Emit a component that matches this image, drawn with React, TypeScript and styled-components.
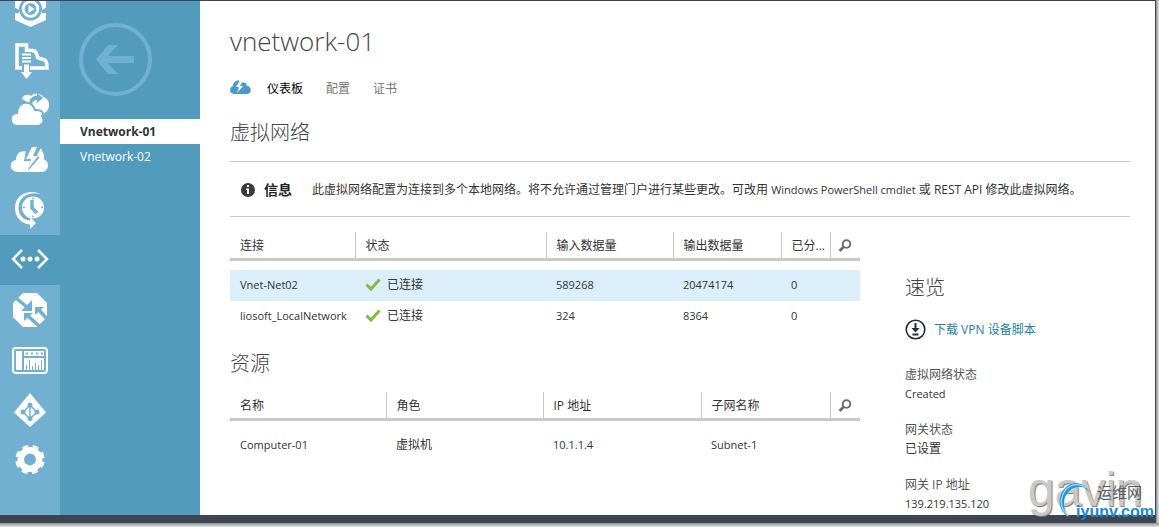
import React from "react";
import styled, { createGlobalStyle, css } from "styled-components";

const Global = createGlobalStyle`
  * { box-sizing: border-box; }
  body { margin: 0; background: #fff; }
  body, button, table { font-family: "Open Sans", "Noto Sans CJK SC", sans-serif; font-size: 12px; line-height: 18px; color: #333; }
`;

const Page = styled.div`
  position: relative;
  min-height: 100vh;
  display: flex;
  padding: 0 3px 4px 0;
  background: linear-gradient(#8d8f93, #e4e4e4) bottom / 100% 4px no-repeat, linear-gradient(90deg, #8d8f93, #e4e4e4) right / 3px 100% no-repeat;
`;
const Frame = styled.div`
  flex: 1;
  display: flex;
  background: #fff;
  border: solid #3c4550;
  border-width: 1px 1px 8px 0;
`;
const Rail = styled.nav`
  flex: 0 0 60px;
  overflow: hidden;
  background: #72b0d2;
`;
const RailList = styled.ul`
  list-style: none;
  margin: -16px 0 0;
  padding: 0;
`;
const RailButton = styled.button<{ $active?: boolean }>`
  display: flex;
  width: 100%;
  height: 50px;
  align-items: center;
  justify-content: center;
  padding: 0;
  border: 0;
  color: #fff;
  background: ${(p) => (p.$active ? "#519bbd" : "transparent")};
`;
const SubNav = styled.nav`
  flex: 0 0 140px;
  background: #519bbd;
`;
const BackButton = styled.button`
  display: block;
  margin: 20px 0 20px 17px;
  padding: 0;
  border: 0;
  background: none;
  color: #72b0d2;
  height: 78px;
`;
const SubLink = styled.a<{ $active?: boolean }>`
  display: block;
  padding: 0 20px;
  line-height: 25px;
  text-decoration: none;
  color: #fff;
  ${(p) => p.$active && css`background: #fff; color: #333; font-weight: 700;`}
`;
const Main = styled.main`
  flex: 1;
  min-width: 0;
  padding: 20px 25px 0 30px;
`;
const Title = styled.h1`
  margin: 0;
  font-size: 26px;
  line-height: 40px;
  font-weight: 300;
  color: #444;
`;
const Tabs = styled.div`
  display: flex;
  align-items: center;
  margin-top: 17px;
  height: 20px;
`;
const TabLink = styled.a<{ $active?: boolean }>`
  margin-left: ${(p) => (p.$active ? 16 : 23)}px;
  padding-top: 2px;
  text-decoration: none;
  color: ${(p) => (p.$active ? "#000" : "#777")};
`;
const Heading = styled.h2`
  margin: 0;
  font-size: 20px;
  line-height: 30px;
  font-weight: 300;
  color: #444;
`;
const PageHeading = styled(Heading)`
  margin: 20px 0 13px;
`;
const ResourceHeading = styled(Heading)`
  margin-top: 17px;
`;
const Latin = styled.span`
  font-size: 11px;
`;
const Notice = styled.div`
  display: flex;
  align-items: center;
  height: 56px;
  padding: 2px 0 0 10px;
  border: solid #c8c8c8;
  border-width: 1px 0;
`;
const NoticeTitle = styled.strong`
  margin: 0 20px 0 8px;
  font-size: 14px;
  color: #222;
`;
const Columns = styled.div`
  display: flex;
  gap: 45px;
`;
const Tables = styled.div`
  flex: 0 1 630px;
`;
const Side = styled.aside`
  flex: 1;
  padding-top: 56px;
`;
const Grid = styled.table<{ $gap: number }>`
  width: 100%;
  margin-top: ${(p) => p.$gap}px;
  border-collapse: collapse;
  table-layout: fixed;
`;
const Head = styled.th<{ $w?: number }>`
  width: ${(p) => (p.$w ? p.$w + "px" : "auto")};
  height: 27px;
  padding: 2px 4px 0 10px;
  text-align: left;
  font-weight: 400;
  white-space: nowrap;
  border-bottom: 3px solid #c8c8c8;
  & + & { border-left: 1px solid #c8c8c8; }
`;
const SearchHead = styled(Head)`
  padding: 7px 0 0 7px;
`;
const IconButton = styled.button`
  display: block;
  padding: 0;
  border: 0;
  background: none;
`;
const Spacer = styled.tr<{ $h: number }>`
  height: ${(p) => p.$h}px;
`;
const Row = styled.tr<{ $selected?: boolean }>`
  height: 31px;
  background: ${(p) => (p.$selected ? "#daeff9" : "transparent")};
`;
const Cell = styled.td`
  padding: 0 0 0 10px;
  white-space: nowrap;
`;
const Status = styled.span`
  display: flex;
  align-items: center;
  gap: 6px;
`;
const Download = styled.a`
  display: flex;
  align-items: center;
  gap: 8px;
  margin: 16px 0 25px;
  color: #23819c;
  text-decoration: none;
`;
const Facts = styled.dl`
  margin: 0;
`;
const Term = styled.dt`
  line-height: 19px;
  color: #555;
`;
const Value = styled.dd`
  margin: 0 0 17px;
  line-height: 19px;
  &:last-child { margin-bottom: 0; }
`;
const Watermark = styled.div`
  position: absolute;
  right: 5px;
  bottom: 3px;
  width: 128px;
  height: 54px;
`;
const Signature = styled.span`
  position: absolute;
  left: 2px;
  top: 0;
  font: 48px/40px "Liberation Sans", sans-serif;
  color: #c9c9c9;
  text-shadow: 1px 1px 1px #777;
`;
const Swirl = styled.svg`
  position: absolute;
  left: 29px;
  top: 9px;
`;
const SiteName = styled.span`
  position: absolute;
  left: 71px;
  top: 12px;
  font-size: 15px;
  line-height: 20px;
  color: #555b66;
`;
const SiteUrl = styled.span`
  position: absolute;
  right: 0;
  bottom: 2px;
  font: 700 16px/20px "Liberation Sans", sans-serif;
  color: #1787d8;
`;

const BG = "#72b0d2";
const icons: { label: string; art: React.ReactNode }[] = [
  {
    label: "媒体服务",
    art: (
      <>
        <path d="M5 8L20.500 0 36 8v22l-15.500 7L5 30z" />
        <circle cx="20.500" cy="19" r="11.500" fill={BG} />
        <path d="M4 17l5 3v3H4zM37 17l-5 3v3h5z" fill={BG} />
        <circle cx="20.500" cy="19" r="7.300" fill="none" stroke="#fff" strokeWidth="2.800" />
        <path d="M18.500 15l6 4-6 4z" />
      </>
    ),
  },
  {
    label: "导入导出",
    art: (
      <>
        <path d="M12 28H7V5h9.500v7M17 10.500h6c4 1 4 4 4.500 7 3 2 6 1 8 3 1.500 2 1.500 4 1.500 7.500H20" fill="none" stroke="#fff" strokeWidth="3.500" />
        <path d="M11 12h11v14H11z" fill={BG} />
        <path d="M12 13.500h9v2h-9zM12 17h9v2h-9zM12 20.500h9v2h-9zM14 24.500h5V32h3L16.500 39 11 32h3z" />
      </>
    ),
  },
  {
    label: "云服务",
    art: (
      <>
        <path d="M12 9c1-5 7-5 9-3 3-4 10-3 12 1 4 1 6 4 6 8 0 5-3 8-7 9L17 12z" />
        <path d="M19 12q2-6 8-6.500V3l6 5-6 5v-3q-4 0-5 4z" fill={BG} />
        <path d="M8 36c-9 0-10-12-1-13 0-12 15-14 18-3 8-1 9 5 7 6 4 6-1 10-5 10z" stroke={BG} strokeWidth="2" />
      </>
    ),
  },
  {
    label: "云应用",
    art: (
      <>
        <path d="M8 32c-9 0-10-11-2-12 0-9 9-12 15-5l11 1 1 3c7 1 7 13-2 13z" />
        <path d="M17 5h14l-4 12h3L18 31l2-10h-6z" fill={BG} />
        <path d="M22 7h5l-4 9h5L18 29l3-10h-5z" />
        <path d="M25 30l5-14-3-1 4-7 3 7v6l-6 9z" />
      </>
    ),
  },
  {
    label: "计划程序",
    art: (
      <>
        <circle cx="23" cy="17.500" r="11" />
        <path d="M22 10v8l5 5" fill="none" stroke={BG} strokeWidth="3.500" />
        <path d="M13 17.500h2M31 17.500h2M23 7.500v2M23 25.500v2" stroke={BG} strokeWidth="1.500" />
        <path d="M30 4C20-1 5 4 5 18c0 10 7 16 15 16.500V39l6-6-6-6v3.500C13 30 8.500 25 8.500 18 8.500 7 19 1 30 4z" />
      </>
    ),
  },
  {
    label: "网络",
    art: (
      <>
        <path d="M12 10L3 19l9 9M28 10l9 9-9 9" fill="none" stroke="#fff" strokeWidth="2.500" />
        <circle cx="13" cy="19" r="2.500" /><circle cx="20" cy="19" r="2.500" /><circle cx="27" cy="19" r="2.500" />
      </>
    ),
  },
  {
    label: "流量管理器",
    art: (
      <>
        <path d="M13 3h14l10 10v14L27 37H13L3 27V13z" />
        <path d="M6 8l12 10M30 37L17 25M39 31L28 19" stroke={BG} strokeWidth="3.500" />
        <path d="M22 10v11H11zM14 23h9l-9 8zM25 17h9l-9 8z" fill={BG} />
      </>
    ),
  },
  {
    label: "管理服务",
    art: (
      <>
        <rect x="3" y="8" width="34" height="25" rx="3" fill="none" stroke="#fff" strokeWidth="2" />
        <path d="M6 11h6v19H6zM14 11h20v5H14zM14 18h20v12H14z" />
        <path d="M16 13.500h2m3 0h2m3 0h2m3 0h2" stroke={BG} strokeWidth="2" />
        <path d="M16.500 30v-5M19.500 30V20M22.500 30v-4M25.500 30v-7M28.500 30v-5M31.500 30V20" stroke={BG} />
      </>
    ),
  },
  {
    label: "目录",
    art: (
      <>
        <path d="M20 3l16 19.500L20 37 4 22.500z" />
        <path d="M20 15l-7 7.500 7 6 7-6zV28" fill="none" stroke={BG} strokeWidth="1.500" />
        <g fill={BG}><circle cx="20" cy="15" r="2.500" /><circle cx="13" cy="22" r="2.500" /><circle cx="27" cy="22" r="2.500" /><circle cx="20" cy="28.500" r="2.500" /></g>
      </>
    ),
  },
  {
    label: "设置",
    art: (
      <g transform="rotate(10 20 19.500)" fill="none" stroke="#fff">
        <circle cx="20" cy="19.500" r="9.200" strokeWidth="6.500" />
        <circle cx="20" cy="19.500" r="12.500" strokeWidth="4.500" strokeDasharray="5.600 4.217" />
      </g>
    ),
  },
];

const Search = () => (
  <svg width="14" height="14" viewBox="0 0 14 14" fill="none" stroke="#666" aria-hidden="true">
    <circle cx="8.500" cy="5" r="3.800" strokeWidth="1.800" />
    <path d="M5.500 8L1.500 12" strokeWidth="2.500" />
  </svg>
);
const Check = () => (
  <svg width="16" height="14" viewBox="0 0 16 14" aria-hidden="true">
    <path d="M1.500 6.500l4.500 4.500L14.500 1.500" fill="none" stroke="#82bc3f" strokeWidth="3" />
  </svg>
);
const SearchCell = () => (
  <SearchHead $w={30}>
    <IconButton aria-label="搜索"><Search /></IconButton>
  </SearchHead>
);

const connections = [
  ["Vnet-Net02", "589268", "20474174", "0"],
  ["liosoft_LocalNetwork", "324", "8364", "0"],
];

export default function App() {
  return (
    <Page>
      <Global />
      <Frame>
        <Rail>
          <RailList>
            {icons.map((icon) => (
              <li key={icon.label}>
                <RailButton $active={icon.label === "网络"} aria-label={icon.label}>
                  <svg width="40" height="40" viewBox="0 0 40 40" fill="#fff">{icon.art}</svg>
                </RailButton>
              </li>
            ))}
          </RailList>
        </Rail>
        <SubNav>
          <BackButton aria-label="返回">
            <svg width="78" height="78" viewBox="0 0 78 78" fill="none" stroke="currentColor">
              <circle cx="38.500" cy="38.500" r="34.500" strokeWidth="4" />
              <path d="M57 38.500H24" strokeWidth="7" />
              <path d="M31 24h10L27.500 38.500 41 53H31L19 38.500z" fill="currentColor" stroke="none" />
            </svg>
          </BackButton>
          <SubLink href="#vnetwork-01" $active>Vnetwork-01</SubLink>
          <SubLink href="#vnetwork-02">Vnetwork-02</SubLink>
        </SubNav>
        <Main>
          <Title>vnetwork-01</Title>
          <Tabs>
            <svg width="21" height="16" viewBox="0 0 21 16" aria-hidden="true">
              <path d="M4 14C-1 14-1 7 3 6c0-5 6-7 8-4l5 1 1 3c5 0 5 8 0 8z" fill="#4a9ad0" />
              <path d="M10 0L6 7h3l-2 6 6-7h-3l3-5z" fill="#fff" />
            </svg>
            <TabLink href="#dashboard" $active>仪表板</TabLink>
            <TabLink href="#configure">配置</TabLink>
            <TabLink href="#certificates">证书</TabLink>
          </Tabs>
          <PageHeading>虚拟网络</PageHeading>
          <Notice>
            <svg width="16" height="16" viewBox="0 0 16 16" aria-hidden="true">
              <circle cx="8" cy="8" r="7" fill="#3b3b3b" />
              <path d="M7 3h2v2H7zM6 6.500h3V12H7V8H6z" fill="#fff" />
            </svg>
            <NoticeTitle>信息</NoticeTitle>
            <span>
              此虚拟网络配置为连接到多个本地网络。将不允许通过管理门户进行某些更改。可改用 <Latin>Windows PowerShell cmdlet</Latin> 或 REST API 修改此虚拟网络。
            </span>
          </Notice>
          <Columns>
            <Tables>
              <Grid $gap={15}>
                <thead>
                  <tr>
                    <Head $w={125}>连接</Head>
                    <Head>状态</Head>
                    <Head $w={127}>输入数据量</Head>
                    <Head $w={108}>输出数据量</Head>
                    <Head $w={49}>已分...</Head>
                    <SearchCell />
                  </tr>
                </thead>
                <tbody>
                  <Spacer $h={10} aria-hidden="true"><td colSpan={6} /></Spacer>
                  {connections.map(([name, input, output, used], i) => (
                    <Row key={name} $selected={i === 0}>
                      <Cell><Latin>{name}</Latin></Cell>
                      <Cell><Status><Check />已连接</Status></Cell>
                      <Cell><Latin>{input}</Latin></Cell>
                      <Cell><Latin>{output}</Latin></Cell>
                      <Cell colSpan={2}><Latin>{used}</Latin></Cell>
                    </Row>
                  ))}
                </tbody>
              </Grid>
              <ResourceHeading>资源</ResourceHeading>
              <Grid $gap={13}>
                <thead>
                  <tr>
                    <Head $w={156}>名称</Head>
                    <Head $w={157}>角色</Head>
                    <Head $w={158}>IP 地址</Head>
                    <Head>子网名称</Head>
                    <SearchCell />
                  </tr>
                </thead>
                <tbody>
                  <Spacer $h={10} aria-hidden="true"><td colSpan={5} /></Spacer>
                  <Row>
                    <Cell><Latin>Computer-01</Latin></Cell>
                    <Cell>虚拟机</Cell>
                    <Cell><Latin>10.1.1.4</Latin></Cell>
                    <Cell colSpan={2}><Latin>Subnet-1</Latin></Cell>
                  </Row>
                </tbody>
              </Grid>
            </Tables>
            <Side>
              <Heading>速览</Heading>
              <Download href="#vpn-script">
                <svg width="21" height="21" viewBox="0 0 21 21" fill="none" stroke="#222e38" aria-hidden="true">
                  <circle cx="10.500" cy="10.500" r="9.300" strokeWidth="1.600" />
                  <path d="M10.500 4v7M7.500 15.500h6" strokeWidth="2" />
                  <path d="M6.500 9h8l-4 4.500z" fill="#222e38" stroke="none" />
                </svg>
                <span>下载 VPN 设备脚本</span>
              </Download>
              <Facts>
                <Term>虚拟网络状态</Term>
                <Value><Latin>Created</Latin></Value>
                <Term>网关状态</Term>
                <Value>已设置</Value>
                <Term>网关 IP 地址</Term>
                <Value><Latin>139.219.135.120</Latin></Value>
              </Facts>
            </Side>
          </Columns>
        </Main>
      </Frame>
      <Watermark>
        <Signature>gavin</Signature>
        <Swirl width="40" height="40" viewBox="0 0 40 40" fill="none" aria-hidden="true">
          <path d="M35 15C31 3 19 1 11 8S1 31 14 38C6 28 8 15 17 10s15-1 18 5z" fill="#1e96dc" />
          <path d="M31 9C23 2 12 6 8 15S8 32 13 37" stroke="#8fd4f6" strokeWidth="1.500" />
        </Swirl>
        <SiteName>运维网</SiteName>
        <SiteUrl>iyunv.com</SiteUrl>
      </Watermark>
    </Page>
  );
}
